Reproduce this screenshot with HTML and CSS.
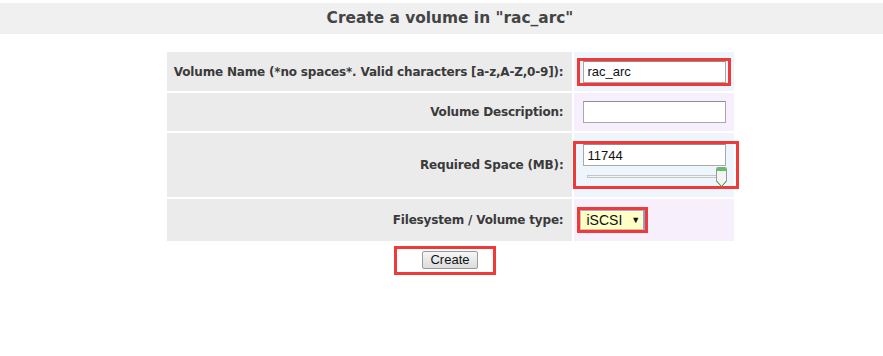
FILE: index.html
```html
<!DOCTYPE html>
<html lang="en">
  <head>
    <meta charset="UTF-8" />
    <title>Create a volume</title>
    <link rel="stylesheet" href="styles.css">
  </head>
  <body>
    <div class="page">
      <h1 class="title">Create a volume in "rac_arc"</h1>

      <form class="vol-form">
        <table class="vol-table">
          <colgroup>
            <col class="col-label" />
            <col class="col-value" />
          </colgroup>
          <tr class="row-name">
            <th>Volume Name (*no spaces*. Valid characters [a-z,A-Z,0-9]):</th>
            <td class="blue">
              <span class="mark mark-name">
                <input class="txt" type="text" value="rac_arc" />
              </span>
            </td>
          </tr>
          <tr class="row-desc">
            <th>Volume Description:</th>
            <td class="lilac"><input class="txt" type="text" value="" /></td>
          </tr>
          <tr class="row-space">
            <th>Required Space (MB):</th>
            <td class="blue">
              <div class="mark mark-space">
                <input class="txt" type="text" value="11744" />
                <div class="slider">
                  <div class="track"></div>
                  <svg class="thumb" width="11" height="20" viewBox="0 0 11 20">
                    <path d="M0.5 1.5 Q0.5 0.5 1.5 0.5 H9.5 Q10.5 0.5 10.5 1.5 V14 L5.5 19.5 L0.5 14 Z" fill="#f4f4f4" stroke="#9a9a9a" />
                    <path d="M1 1.5 Q1 1 1.5 1 H9.5 Q10 1 10 1.5 V4 H1 Z" fill="#5cc45c" />
                    <path d="M0.5 14 L5.5 19.5 L10.5 14" fill="none" stroke="#3aa03a" />
                  </svg>
                </div>
              </div>
            </td>
          </tr>
          <tr class="row-type">
            <th>Filesystem / Volume type:</th>
            <td class="lilac">
              <span class="mark mark-type">
                <span class="sel">iSCSI <span class="arrow">&#9660;</span></span>
              </span>
            </td>
          </tr>
        </table>

        <div class="actions">
          <span class="mark mark-btn">
            <button class="btn" type="button">Create</button>
          </span>
        </div>
      </form>
    </div>
  </body>
</html>
```

FILE: styles.css
```css
* {
  margin: 0;
  padding: 0;
  box-sizing: border-box;
}

html {
  overflow: hidden;
}

body {
  background: #fff;
  font-family: "DejaVu Sans", Verdana, sans-serif;
  color: #333;
}

.page {
  width: 900px;
}

.title {
  margin-top: 3px;
  height: 31px;
  line-height: 31px;
  background: #f0f0f0;
  text-align: center;
  font-size: 15.4px;
  font-weight: bold;
  color: #444;
}

.vol-table {
  margin: 16px auto 0;
  width: 571px;
  table-layout: fixed;
  border-spacing: 2px;
}

.col-label {
  width: 405px;
}

.col-value {
  width: 160px;
}

.vol-table th {
  background: #ebebeb;
  text-align: right;
  white-space: nowrap;
  font-size: 12px;
  letter-spacing: -0.18px;
  font-weight: bold;
  color: #3a3a3a;
  padding: 0 8px 0 0;
}

.vol-table td {
  padding: 0 0 0 9px;
}

.row-name {
  height: 39px;
}

.row-desc {
  height: 38px;
}

.row-space {
  height: 64px;
}

.row-type {
  height: 42px;
}

.blue {
  background: #eef5fc;
}

.lilac {
  background: #f7f0fc;
}

.txt {
  display: block;
  width: 143px;
  height: 22px;
  border: 1px solid #a9a9a9;
  border-top-color: #8f8f8f;
  background: #fff;
  font-family: "Liberation Sans", Arial, sans-serif;
  font-size: 13px;
  color: #111;
  padding: 0 4px;
}

.mark {
  display: inline-block;
  border: 3px solid #f03a3a;
}

.mark-name {
  margin-left: -6px;
  padding: 0 2px 0 3px;
  vertical-align: middle;
}

.mark-space {
  margin: 0 0 0 -10px;
  padding: 0 0 0 7px;
  width: 166px;
}

.slider {
  position: relative;
  height: 20px;
}

.track {
  position: absolute;
  left: 4px;
  right: 16px;
  top: 9px;
  height: 3px;
  border: 1px solid #c4c4c4;
  background: #f4f4f4;
}

.thumb {
  position: absolute;
  left: 133px;
  top: 1px;
}

.mark-type {
  margin-left: -6px;
  vertical-align: middle;
}

.sel {
  display: block;
  width: 65px;
  height: 20px;
  line-height: 18px;
  padding: 0 0 0 6px;
  background: #ffffc8;
  border: 1px solid #c8c8a0;
  border-right: 2px solid #8aa0d4;
  border-top-color: #9aaee0;
  font-family: "Liberation Sans", Arial, sans-serif;
  font-size: 14px;
  color: #111;
}

.arrow {
  font-size: 9px;
  margin-left: 5px;
  vertical-align: 2px;
}

.actions {
  text-align: center;
  margin-top: 3px;
}

.mark-btn {
  margin-right: 10px;
  padding: 2px 15px 3px 25px;
}

.btn {
  display: block;
  width: 56px;
  height: 18px;
  border: 1px solid #9a9a9a;
  border-radius: 2px;
  background: linear-gradient(#f6f6f6, #dcdcdc);
  font-family: "Liberation Sans", Arial, sans-serif;
  font-size: 13px;
  line-height: 16px;
  color: #111;
}
```
